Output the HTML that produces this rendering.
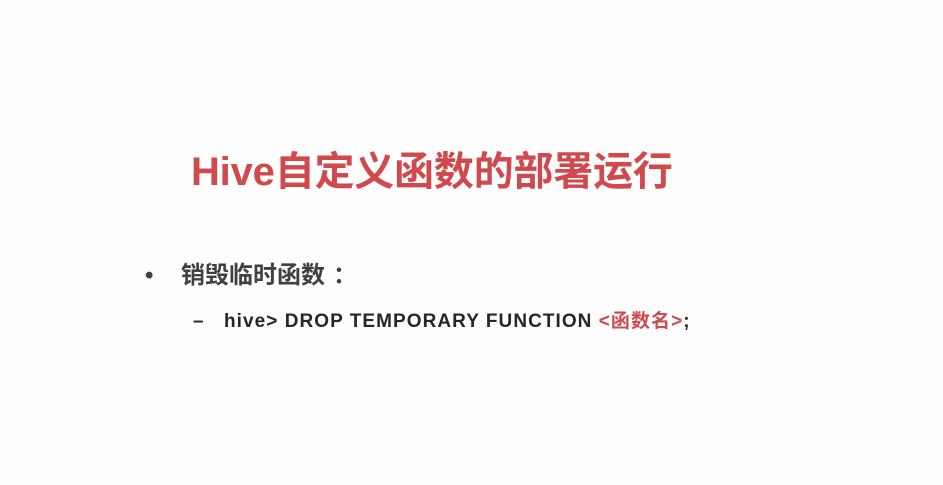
<!DOCTYPE html>
<html><head><meta charset="utf-8"><style>
html,body{margin:0;padding:0;background:#fefefe;width:943px;height:485px;overflow:hidden;position:relative;font-family:"Liberation Sans","Noto Sans CJK SC",sans-serif;}
.t{position:absolute;left:191px;top:144px;font-size:40px;font-weight:bold;color:#d0494c;white-space:nowrap;line-height:56px;letter-spacing:-0.2px;}
.b{position:absolute;left:145px;top:259px;font-size:24px;font-weight:bold;color:#404040;white-space:nowrap;line-height:34px;}
.b .dot{display:inline-block;width:36px;}
.b .c{display:inline-block;margin-left:8px;}
.s{position:absolute;left:193px;top:308px;font-size:19px;font-weight:bold;color:#262626;white-space:nowrap;line-height:28px;letter-spacing:1.05px;}
.s .d{display:inline-block;width:31px;letter-spacing:0;}
.r{color:#d0494c;}
</style></head><body>
<div class="t">Hive自定义函数的部署运行</div>
<div class="b"><span class="dot">•</span>销毁临时函数<span class="c">：</span></div>
<div class="s"><span class="d">–</span>hive&gt; DROP TEMPORARY FUNCTION <span class="r">&lt;函数名&gt;</span>;</div>
</body></html>
